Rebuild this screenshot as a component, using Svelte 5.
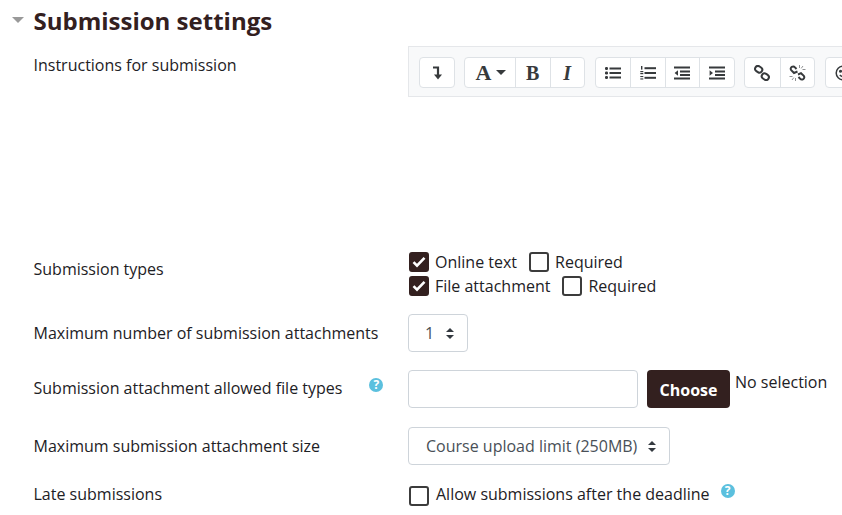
<script>
	// same check mark for both ticked boxes
	const tick = 'M1.5 6.2 5 9.7 12.5 1.8';
</script>

<div class="page">
	<header class="section-head">
		<span class="caret"></span>
		<h2>Submission settings</h2>
	</header>

	<div class="row editor-row">
		<div class="label">Instructions for submission</div>
		<div class="toolbar">
			<div class="group">
				<button class="tool first">
					<svg width="10" height="14" viewBox="0 0 10 14"><path d="M1 1.5h5v8" fill="none" stroke="#373a3c" stroke-width="2.2"/><path d="M2 8.5h8L6 13.5z" fill="#373a3c"/></svg>
				</button>
			</div>
			<div class="group">
				<button class="tool wide"><span class="serif big">A</span><span class="drop"></span></button>
				<button class="tool"><span class="serif bold">B</span></button>
				<button class="tool"><span class="serif italic">I</span></button>
			</div>
			<div class="group">
				<button class="tool">
					<svg width="16" height="14" viewBox="0 0 16 14" fill="#373a3c"><rect x="0" y="1" width="3" height="3" rx="1.2"/><rect x="0" y="5.5" width="3" height="3" rx="1.2"/><rect x="0" y="10" width="3" height="3" rx="1.2"/><rect x="4.5" y="1.5" width="11.5" height="2"/><rect x="4.5" y="6" width="11.5" height="2"/><rect x="4.5" y="10.5" width="11.5" height="2"/></svg>
				</button>
				<button class="tool">
					<svg width="16" height="14" viewBox="0 0 16 14" fill="#373a3c"><rect x="1" y="0" width="1.4" height="3.6"/><rect x="0.3" y="5" width="3" height="1.2"/><rect x="0.3" y="7" width="3" height="1.2"/><rect x="0.3" y="10" width="3" height="1.1"/><rect x="0.3" y="12.4" width="3" height="1.1"/><rect x="4.5" y="1.2" width="11.5" height="2"/><rect x="4.5" y="6" width="11.5" height="2"/><rect x="4.5" y="10.8" width="11.5" height="2"/></svg>
				</button>
				<button class="tool">
					<svg width="16" height="14" viewBox="0 0 16 14" fill="#373a3c"><rect x="0" y="0.5" width="16" height="2"/><rect x="6" y="4.5" width="10" height="2"/><rect x="6" y="8" width="10" height="2"/><rect x="0" y="11.5" width="16" height="2"/><path d="M4 4.2v5.6L0.6 7z"/></svg>
				</button>
				<button class="tool">
					<svg width="16" height="14" viewBox="0 0 16 14" fill="#373a3c"><rect x="0" y="0.5" width="16" height="2"/><rect x="6" y="4.5" width="10" height="2"/><rect x="6" y="8" width="10" height="2"/><rect x="0" y="11.5" width="16" height="2"/><path d="M0.6 4.2v5.6L4 7z"/></svg>
				</button>
			</div>
			<div class="group">
				<button class="tool">
					<svg width="16" height="16" viewBox="0 0 16 16" fill="none" stroke="#373a3c" stroke-width="2"><rect x="1" y="1.5" width="7.4" height="5.6" rx="2.8" transform="rotate(35 4.7 4.3)"/><rect x="7.6" y="8.9" width="7.4" height="5.6" rx="2.8" transform="rotate(35 11.3 11.7)"/></svg>
				</button>
				<button class="tool">
					<svg width="17" height="16" viewBox="0 0 17 16" fill="none" stroke="#373a3c" stroke-width="2"><path d="M8.5 6.5 5 8 2.200 5.200C1.300 4 1.700 2.600 2.800 1.900 4 1.200 5.200 1.500 6 2.400L7.500 4"/><path d="M9 9.500 12 8.200 14.800 10.800C15.700 12 15.300 13.400 14.200 14.100 13 14.800 11.800 14.500 11 13.600L9.500 12"/><path d="M10.500 0v3M14 1l-1.800 2.400M16.500 4.500h-3M.5 11.500h3M3 15l1.800-2.400M6.500 16v-3" stroke="#8f9193" stroke-width="1"/></svg>
				</button>
			</div>
			<div class="group">
				<button class="tool">
					<svg width="16" height="16" viewBox="0 0 16 16" fill="none" stroke="#373a3c" stroke-width="1.5"><circle cx="8" cy="8" r="6.8"/><circle cx="5.5" cy="6.3" r=".8" fill="#373a3c"/><circle cx="10.5" cy="6.3" r=".8" fill="#373a3c"/><path d="M4.8 10c1.800 2 4.600 2 6.400 0"/></svg>
				</button>
			</div>
		</div>
	</div>

	<div class="row types-row">
		<div class="label">Submission types</div>
		<div class="checks">
			<div class="check-line">
				<span class="box on"><svg width="14" height="12" viewBox="0 0 14 12"><path d={tick} fill="none" stroke="#fff" stroke-width="2.6"/></svg></span>
				<span>Online text</span>
				<span class="box"></span>
				<span>Required</span>
			</div>
			<div class="check-line">
				<span class="box on"><svg width="14" height="12" viewBox="0 0 14 12"><path d={tick} fill="none" stroke="#fff" stroke-width="2.6"/></svg></span>
				<span>File attachment</span>
				<span class="box"></span>
				<span>Required</span>
			</div>
		</div>
	</div>

	<div class="row number-row">
		<div class="label">Maximum number of submission attachments</div>
		<div class="select small">1 <span class="updown"></span></div>
	</div>

	<div class="row types-file-row">
		<div class="label with-help">
			<span>Submission attachment allowed file types</span>
			<span class="help">?</span>
		</div>
		<div class="file-picker">
			<div class="text-input"></div>
			<button class="choose">Choose</button>
			<span class="no-selection">No selection</span>
		</div>
	</div>

	<div class="row size-row">
		<div class="label">Maximum submission attachment size</div>
		<div class="select">Course upload limit (250MB) <span class="updown"></span></div>
	</div>

	<div class="row late-row">
		<div class="label">Late submissions</div>
		<div class="late">
			<span class="box"></span>
			<span>Allow submissions after the deadline</span>
			<span class="help">?</span>
		</div>
	</div>
</div>

<style>
	:global(body) {
		margin: 0;
		background: #fff;
		overflow: hidden;
	}

	.page {
		width: 842px;
		height: 515px;
		overflow: hidden;
		box-sizing: border-box;
		font-family: "Open Sans", "Noto Sans", sans-serif;
		font-size: 16px;
		line-height: 24px;
		color: #1d2125;
	}

	.section-head {
		display: flex;
		align-items: center;
		height: 42px;
		padding-left: 12px;
	}

	.caret {
		width: 0;
		height: 0;
		border-left: 6px solid transparent;
		border-right: 6px solid transparent;
		border-top: 6px solid #999;
		margin-right: 9.5px;
		margin-top: -2px;
	}

	h2 {
		margin: 0;
		font-size: 24px;
		font-weight: 700;
		line-height: 42px;
		color: #33201f;
	}

	.row {
		display: grid;
		grid-template-columns: 374.5px 1fr;
		padding-left: 33.5px;
	}

	.label {
		white-space: nowrap;
	}

	.editor-row {
		margin-top: 4px;
		height: 204px;
	}

	.editor-row .label {
		padding-top: 7px;
	}

	.toolbar {
		display: flex;
		gap: 9.5px;
		box-sizing: border-box;
		height: 51px;
		width: 480px;
		padding: 10px;
		background: #f8f9fa;
		border: 1px solid #e5e7ea;
	}

	.group {
		display: flex;
		height: 29px;
		flex: none;
		background: #fff;
		border: 1px solid #dee2e6;
		border-radius: 4px;
	}

	.tool {
		display: flex;
		align-items: center;
		justify-content: center;
		gap: 5px;
		width: 34.5px;
		padding: 0;
		border: 0;
		border-left: 1px solid #dee2e6;
		background: none;
	}

	.tool:first-child {
		border-left: 0;
	}

	.tool.first {
		width: 33.5px;
	}

	.tool.wide {
		width: 50px;
		padding-left: 2px;
	}

	.serif {
		font-family: "Liberation Serif", serif;
		color: #373a3c;
		font-size: 20px;
		line-height: 1;
	}

	.big {
		font-size: 22px;
		font-weight: 700;
	}

	.bold {
		font-weight: 700;
	}

	.italic {
		font-style: italic;
		font-weight: 700;
	}

	.drop {
		width: 0;
		height: 0;
		border-left: 5px solid transparent;
		border-right: 5px solid transparent;
		border-top: 5px solid #373a3c;
	}

	.types-row .label {
		padding-top: 7px;
	}

	.check-line {
		display: flex;
		align-items: center;
		height: 24px;
		color: #1d2125;
	}

	.box {
		flex: none;
		box-sizing: border-box;
		display: flex;
		align-items: center;
		justify-content: center;
		width: 20px;
		height: 20px;
		margin-left: 1px;
		margin-right: 6px;
		border: 2px solid #3c3c3c;
		border-radius: 3px;
		background: #fff;
	}

	.box.on {
		background: #33201f;
		border-color: #33201f;
	}

	.check-line .box:not(.on) {
		margin-left: 12px;
	}

	.number-row {
		margin-top: 16px;
	}

	.number-row .label {
		padding-top: 7px;
	}

	.select {
		display: inline-flex;
		align-items: center;
		justify-self: start;
		box-sizing: border-box;
		height: 38px;
		padding: 0 13px 0 17px;
		gap: 11px;
		color: #495057;
		background: #fff;
		border: 1px solid #ced4da;
		border-radius: 4px;
		white-space: nowrap;
	}

	.select.small {
		width: 60px;
		padding-left: 16px;
		gap: 12px;
	}

	.updown {
		position: relative;
		width: 8px;
		height: 11px;
	}

	.updown::before,
	.updown::after {
		content: '';
		position: absolute;
		left: 0;
		border-left: 4px solid transparent;
		border-right: 4px solid transparent;
	}

	.updown::before {
		top: 0;
		border-bottom: 4px solid #343a40;
	}

	.updown::after {
		bottom: 0;
		border-top: 4px solid #343a40;
	}

	.types-file-row {
		margin-top: 18px;
	}

	.with-help {
		display: flex;
		align-items: flex-start;
		padding-top: 6px;
	}

	.help {
		flex: none;
		display: flex;
		align-items: center;
		justify-content: center;
		width: 14px;
		height: 14px;
		border-radius: 50%;
		background: #5bc0de;
		color: #fff;
		font-size: 12px;
		font-weight: 700;
		line-height: 14px;
	}

	.with-help .help {
		margin-left: 27px;
		margin-top: 2px;
	}

	.file-picker {
		display: flex;
		align-items: flex-start;
	}

	.text-input {
		box-sizing: border-box;
		width: 230px;
		height: 38px;
		background: #fff;
		border: 1px solid #ced4da;
		border-radius: 4px;
	}

	.choose {
		box-sizing: border-box;
		width: 83px;
		height: 38px;
		margin-left: 9px;
		padding: 2px 0 0;
		border: 0;
		border-radius: 4px;
		background: #33201f;
		color: #fff;
		font-family: inherit;
		font-size: 16px;
		font-weight: 700;
	}

	.no-selection {
		margin-left: 5px;
		white-space: nowrap;
	}

	.size-row {
		margin-top: 19px;
	}

	.size-row .label {
		padding-top: 7px;
	}

	.late-row {
		margin-top: 17px;
	}

	.late {
		display: flex;
		align-items: center;
		height: 24px;
	}

	.late .box {
		margin: 4px 7.5px 0 0.5px;
	}

	.late .help {
		margin-left: 11px;
		margin-top: -6px;
	}
</style>
